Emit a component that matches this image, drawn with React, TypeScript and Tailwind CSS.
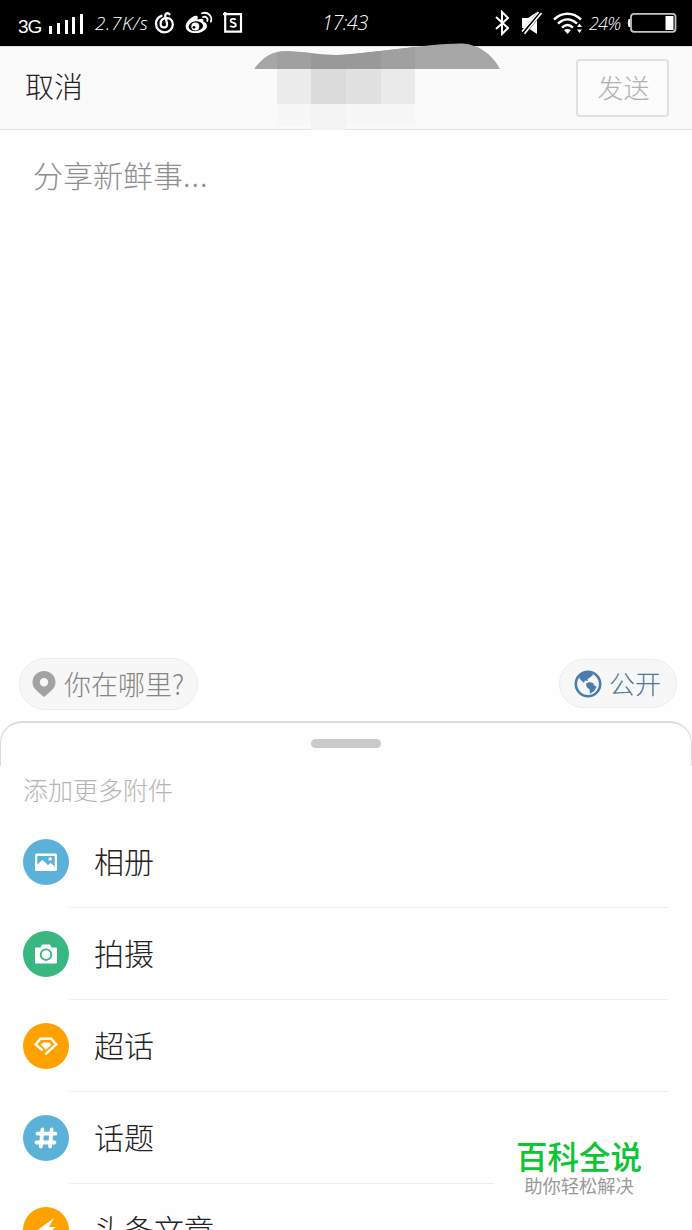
import type { ReactNode } from "react";

const cjk = "font-['Noto_Sans_CJK_SC',sans-serif]";

function StatusBar() {
  return (
    <div className="flex h-[46px] shrink-0 items-center bg-black text-white">
      <div className="flex w-[252px] items-center pl-[18px]">
        <span className="w-[30px] pt-[6px] font-['Liberation_Sans',sans-serif] text-[19px] leading-none tracking-[-1px]">3G</span>
        <svg width="36" height="24" viewBox="0 0 36 24" fill="#fff">
          <path d="M1 15h3v8H1zM9 12h3v11H9zM17 9h3v14h-3zM24 6h3v17h-3zM32 3h3v20h-3z" />
        </svg>
        <span className="ml-[11px] w-[59px] whitespace-nowrap font-['Open_Sans',sans-serif] text-[19px] font-light italic leading-none tracking-[0.6px]">2.7K/s</span>
        <svg width="22" height="24" viewBox="0 0 22 24" fill="none" stroke="#fff" strokeWidth="2.3" strokeLinecap="round">
          <path d="M7.5 4.8C3.8 6.2 2 9 2 12.8C2 17.8 5.8 21.3 10.4 21.3C15.2 21.3 18.8 17.8 18.8 13.4C18.8 9.3 15.8 7 12.4 7C8.8 7 6.6 9.6 6.6 12.4C6.6 14.8 8.2 16.4 10.2 16.4C12.3 16.4 13.4 14.8 13 12.6L11.3 5.5C10.7 2.6 13 1.3 15.4 3.2" />
        </svg>
        <svg className="ml-[9px]" width="28" height="24" viewBox="0 0 28 24">
          <path d="M10.5 4.8C6 5.8.7 11.2.7 15.4C.7 20 5.2 22 10.7 22C17 22 22 18.6 22 14.7C22 12.5 20.3 11.2 18.3 10.7C19.2 7.7 17 7 12.5 8.7C13.3 6 12.6 4.5 10.5 4.8Z" fill="#fff" />
          <ellipse cx="10.8" cy="15.2" rx="7.3" ry="4.9" fill="#000" transform="rotate(-7 10.8 15.2)" />
          <circle cx="10.3" cy="15.5" r="4" fill="#fff" />
          <circle cx="9" cy="16.3" r="1.4" fill="#000" />
          <path d="M17 2.4C22.5.2 28 5 25.8 10.6M18 6C21 5 23.3 7.3 22.3 10" fill="none" stroke="#fff" strokeWidth="1.8" strokeLinecap="round" />
        </svg>
        <svg className="ml-[10px]" width="20" height="22" viewBox="0 0 20 22" fill="none" stroke="#fff" strokeWidth="2.2">
          <path d="M0 2.2h18v17.5H2.2V0" />
          <path d="M12.6 7.8C11.6 6.4 7.6 6.4 7.6 8.7C7.6 11.2 12.8 10.2 12.8 12.9C12.8 15.4 8.3 15.2 7.2 13.7" strokeWidth="1.8" />
        </svg>
      </div>
      <div className="w-[242px] pl-[70px] font-['Open_Sans',sans-serif] text-[20px] font-light italic leading-none tracking-[-0.6px]">17:43</div>
      <div className="flex items-center">
        <svg width="18" height="26" viewBox="0 0 18 26" fill="none" stroke="#fff" strokeWidth="2">
          <path d="m2 7 12 11-6 6V2l6 6L2 19" />
        </svg>
        <svg className="ml-[9px]" width="22" height="24" viewBox="0 0 22 24">
          <path d="M1 7h6l9-6v22l-9-6H1z" fill="#fff" />
          <path d="M2 22.5 19 1.5" stroke="#000" strokeWidth="5" />
          <path d="M1 20.5 17.5 1M3.5 22.8 20.5 2" stroke="#fff" strokeWidth="1.7" />
        </svg>
        <svg className="ml-[10px]" width="30" height="22" viewBox="0 0 30 22" fill="none" stroke="#fff" strokeWidth="2.5">
          <path d="M1 7.5C9-.2 20-.2 28 7.5M5 11.6C11 6 18 6 24 11.6M9 15.6C13 12 16 12 20 15.6" />
          <path d="m11 18 3.5 4 3.5-4q-3.5-2-7 0Z" fill="#fff" stroke="none" />
          <path d="m24 15 2.5-3.5L29 15zM24 17.5h5L26.5 21z" fill="#fff" stroke="none" />
        </svg>
        <span className="ml-[6px] w-[34px] font-['Open_Sans',sans-serif] text-[18px] font-light italic leading-none tracking-[-0.8px]">24%</span>
        <svg className="ml-[4px]" width="50" height="22" viewBox="0 0 50 22" fill="none">
          <rect x="4" y="1.8" width="44.5" height="18" rx="3" stroke="#c4c4c4" strokeWidth="1.8" />
          <path d="M3 7H1.5q-1.5 4 0 8H3z" fill="#fff" />
          <path d="M38.5 4h8v14h-8z" fill="#fff" />
        </svg>
      </div>
    </div>
  );
}

function Header() {
  return (
    <header className="relative flex h-[84px] shrink-0 items-center justify-between border-b border-t border-b-[#e4e4e4] border-t-[#dedede] bg-[#fafafa] pl-[25px] pr-[23px]">
      <span className={`${cjk} pb-[5px] text-[29px] font-light leading-none text-[#222]`}>取消</span>
      <svg className="absolute left-[253px] top-[-4px]" width="250" height="88" viewBox="0 0 250 88">
        <path d="M24 26h34v35H24z" fill="#ececec" />
        <path d="M58 26h35v35H58z" fill="#dbdbdb" />
        <path d="M93 26h35v35H93z" fill="#e1e1e1" />
        <path d="M128 26h34v35h-34z" fill="#eaeaea" />
        <path d="M24 61h34v22H24zM93 61h69v21H93z" fill="#f7f7f7" />
        <path d="M58 61h35v26H58z" fill="#f3f3f3" />
        <path d="M1 26C10 14 19 8 33 8C48 8 68 12 84 12C106 12 175 .5 207 .5C225 .5 239 11 247 26Z" fill="#a6a6a6" />
        <path d="M24 26V9q9-1.5 34 1v16zM128 26V8l34-4v22z" fill="#a0a0a0" />
        <path d="M58 26V10.5Q77 13 93 11.5L128 8v18z" fill="#999" />
      </svg>
      <button className={`${cjk} h-[58px] w-[93px] rounded-[4px] border-2 border-[#e0e0e0] bg-[#fcfcfc] pb-[2px] pl-[2px] text-[26px] font-light leading-none text-[#b0b0b0]`}>发送</button>
    </header>
  );
}

function AlbumIcon() {
  return (
    <svg width="24" height="24" viewBox="0 0 24 24">
      <rect x="1" y="3.5" width="22" height="17.5" rx="1.5" fill="#fff" />
      <path d="M3.3 6h17.4v11l-4-4.2-2.7 2.4L8.5 9.8l-5.2 5z" fill="#5ab2d8" />
      <circle cx="16.2" cy="9" r="1.8" fill="#fff" />
    </svg>
  );
}

function CameraIcon() {
  return (
    <svg width="24" height="24" viewBox="0 0 24 24">
      <path d="M2 5.5h4.5L8 2.5h8l1.5 3H22q1 0 1 1v14q0 1-1 1H2q-1 0-1-1v-14q0-1 1-1Z" fill="#fff" />
      <circle cx="12" cy="12.7" r="5.3" fill="none" stroke="#38b780" strokeWidth="1.9" />
    </svg>
  );
}

function GemIcon() {
  return (
    <svg width="26" height="24" viewBox="0 0 26 24" fill="none" stroke="#fff">
      <path d="M12.3 20.3 23 10.3 18.4 4.8H7.4L2.8 10.3 9.6 16.6" strokeWidth="2.5" />
      <path d="M8.3 10.8 9.7 9h6.7l1.5 1.7-5 4.6z" strokeWidth="1" fill="#fff" />
    </svg>
  );
}

function HashIcon() {
  return (
    <svg width="24" height="24" viewBox="0 0 24 24" fill="none" stroke="#fff" strokeWidth="3.8" strokeLinecap="round">
      <path d="M8.4 3.5 6.9 20.5M17.6 3.5l-1.5 17M3.5 7.7h18M2.5 16.5h18" />
    </svg>
  );
}

function BoltIcon() {
  return (
    <svg width="24" height="24" viewBox="0 0 24 24">
      <path d="M20 0 1 14h8L4 24l18-15h-7z" fill="#fff" />
    </svg>
  );
}

const items: { label: string; circle: string; icon: ReactNode }[] = [
  { label: "相册", circle: "bg-[#5ab2d8]", icon: <AlbumIcon /> },
  { label: "拍摄", circle: "bg-[#38b780]", icon: <CameraIcon /> },
  { label: "超话", circle: "bg-[#ffa200]", icon: <GemIcon /> },
  { label: "话题", circle: "bg-[#5ab2d8]", icon: <HashIcon /> },
  { label: "头条文章", circle: "bg-[#ffa200]", icon: <BoltIcon /> },
];

export default function App() {
  return (
    <div className="relative flex h-[1230px] w-[692px] flex-col overflow-hidden bg-[#fefefe]">
      <StatusBar />
      <Header />
      <main className="h-[528px] shrink-0 pl-[33px] pt-[29px]">
        <p className={`${cjk} text-[30px] font-light leading-none text-[#8e8e8e]`}>
          分享新鲜事<span className="tracking-[1px]">...</span>
        </p>
      </main>
      <div className="flex h-[63px] shrink-0 items-start justify-between pl-[19px] pr-[15px]">
        <div className="flex h-[52px] w-[179px] items-center rounded-full border border-[#ececec] bg-[#f7f7f7] pl-[12px]">
          <svg width="24" height="28" viewBox="0 0 24 28">
            <path fillRule="evenodd" fill="#a3a3a3" d="M12 1C5.5 1 .5 6 .5 12.2C.5 18 5 21 12 27C19 21 23.5 18 23.5 12.2C23.5 6 18.5 1 12 1Zm0 7a4.2 4.2 0 1 1 0 8.4A4.2 4.2 0 0 1 12 8Z" />
          </svg>
          <span className={`${cjk} ml-[8px] whitespace-nowrap pb-[2px] text-[27px] font-light leading-none text-[#858585]`}>你在哪里?</span>
        </div>
        <div className="mt-px flex h-[49px] w-[118px] items-center rounded-full border border-[#ececec] bg-[#f7f7f7] pl-[14px]">
          <svg width="28" height="28" viewBox="0 0 28 28">
            <circle cx="14" cy="14" r="12.2" fill="#f7f7f7" stroke="#4a7cae" strokeWidth="2.6" />
            <path d="M6 5.5 12 1.7l6 1.2 1 2-3.7 3-1.8 1.2.5 2-3-.5-1 2.5L5.3 8.6Z" fill="#4a7cae" />
            <path d="m12 13.5 3.2-1.5 4 1 .8 2.3 2.6 1.4-2.1 4-4.6 3.3-.3-4.6-3-2.3Z" fill="#4a7cae" />
          </svg>
          <span className={`${cjk} ml-[7px] whitespace-nowrap pb-[2px] text-[26px] font-light leading-none text-[#4d779d]`}>公开</span>
        </div>
      </div>
      <section className="flex h-[509px] shrink-0 flex-col">
        <div className="flex h-[45px] shrink-0 justify-center rounded-t-[22px] border-x border-t-2 border-[#dcdcdc] bg-[#fefefe] pt-[16px]">
          <div className="h-[9px] w-[70px] rounded-full bg-[#cacaca]" />
        </div>
        <h2 className={`${cjk} h-[50px] shrink-0 pl-[23px] pt-[11px] text-[25px] font-light leading-none text-[#b5b5b5]`}>添加更多附件</h2>
        <ul>
          {items.map((item) => (
            <li key={item.label} className="flex h-[92px] items-stretch pl-[23px] pr-[24px]">
              <div className={`${item.circle} mt-[22.5px] flex size-[46px] shrink-0 items-center justify-center rounded-full`}>{item.icon}</div>
              <div className={`${cjk} flex flex-1 items-center border-b border-[#ededed] pb-[4px] pl-[25px] text-[30px] font-light leading-none text-[#222]`}>{item.label}</div>
            </li>
          ))}
        </ul>
      </section>
      <div className={`${cjk} absolute bottom-0 right-0 flex h-[105px] w-[198px] flex-col items-center bg-[#fefefe] pr-[28px] pt-[14px]`}>
        <strong className="whitespace-nowrap text-[31.5px] font-medium leading-[32px] text-[#0cc533]">百科全说</strong>
        <span className="mt-[5px] whitespace-nowrap text-[18.3px] font-normal leading-[19px] text-[#999]">助你轻松解决</span>
      </div>
    </div>
  );
}
